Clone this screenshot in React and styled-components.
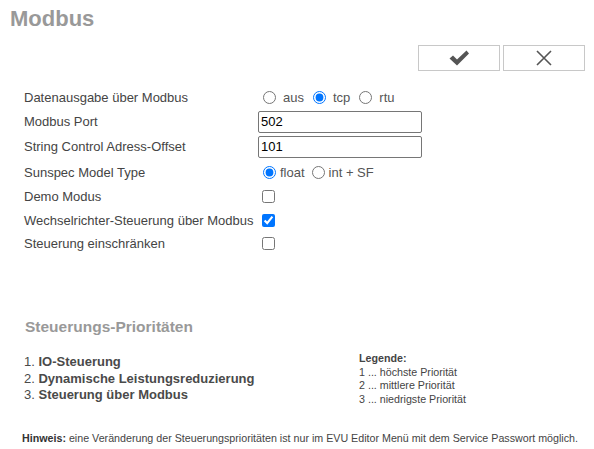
import React from "react";
import styled, { createGlobalStyle } from "styled-components";

const GlobalStyle = createGlobalStyle`
  body {
    margin: 0;
    background: #fff;
    font-family: "Liberation Sans", Arial, sans-serif;
    color: #444;
  }
`;

const settings = [
  { label: "Datenausgabe über Modbus", kind: "radio", name: "out", options: ["aus", "tcp", "rtu"], value: "tcp", h: 24 },
  { label: "Modbus Port", kind: "text", value: "502", h: 25 },
  { label: "String Control Adress-Offset", kind: "text", value: "101", h: 25 },
  { label: "Sunspec Model Type", kind: "radio", name: "sunspec", options: ["float", "int + SF"], value: "float", h: 26, tight: true },
  { label: "Demo Modus", kind: "check", value: false, h: 23 },
  { label: "Wechselrichter-Steuerung über Modbus", kind: "check", value: true, h: 24 },
  { label: "Steuerung einschränken", kind: "check", value: false, h: 23 },
];

const priorities = [
  ["1.", "IO-Steuerung"],
  ["2.", "Dynamische Leistungsreduzierung"],
  ["3.", "Steuerung über Modbus"],
];

const legend = ["1 ... höchste Priorität", "2 ... mittlere Priorität", "3 ... niedrigste Priorität"];

const Page = styled.div`
  padding: 8px 9px 0 10px;
`;

const Title = styled.h1`
  margin: 0;
  font-size: 22px;
  line-height: 22px;
  font-weight: bold;
  color: #999;
`;

const Toolbar = styled.div`
  display: flex;
  justify-content: flex-end;
  gap: 3px;
  margin-top: 15px;
`;

const ToolButton = styled.button`
  width: 82px;
  height: 26px;
  padding: 0;
  display: flex;
  align-items: center;
  justify-content: center;
  background: #fff;
  border: 1px solid #c8c8c8;
  border-radius: 0;
`;

const Form = styled.div`
  display: grid;
  grid-template-columns: 234px 1fr;
  margin: 14px 0 0 14px;
`;

const Label = styled.div`
  height: ${(p) => p.$h}px;
  display: flex;
  align-items: center;
  font-size: 13px;
  color: #444;
`;

const Control = styled.div`
  height: ${(p) => p.$h}px;
  display: flex;
  align-items: center;
`;

const Option = styled.label`
  display: flex;
  align-items: center;
  font-size: 13px;
  color: #555;
  margin-right: ${(p) => (p.$tight ? 2 : 4)}px;

  input {
    margin: 0 ${(p) => (p.$tight ? 4 : 7)}px 0 5px;
    width: 13px;
    height: 13px;
  }
`;

const TextInput = styled.input`
  width: 164px;
  height: 22px;
  box-sizing: border-box;
  padding: 1px 2px;
  font-family: "Liberation Sans", Arial, sans-serif;
  font-size: 13px;
  color: #000;
  border: 1px solid #767676;
  border-radius: 2px;
`;

const Check = styled.input`
  margin: 0 0 0 4px;
  width: 13px;
  height: 13px;
`;

const Section = styled.h2`
  margin: 63px 0 0 15px;
  font-size: 15.5px;
  line-height: 18px;
  font-weight: bold;
  color: #999;
`;

const PriorityRow = styled.div`
  display: flex;
  margin: 18px 0 0 14px;
`;

const PriorityList = styled.ol`
  list-style: none;
  margin: 0;
  padding: 0;
  width: 335px;
  font-size: 13px;
  line-height: 16.5px;
  color: #4a4a4a;
`;

const Legend = styled.div`
  margin-top: -2px;
  font-size: 10.7px;
  line-height: 13.5px;
  color: #444;
`;

const Note = styled.p`
  margin: 26px 0 0 12px;
  font-size: 10.7px;
  color: #444;

  b {
    color: #333;
  }
`;

const CheckIcon = () => (
  <svg width="22" height="18" viewBox="0 0 22 18">
    <path d="M1.5 9.5 L5 6.5 L9 10.5 L18.5 1.5 L21 4.5 L9 16.5 Z" fill="#555" />
  </svg>
);

const CloseIcon = () => (
  <svg width="18" height="18" viewBox="0 0 18 18">
    <path d="M2 2 L16 16 M16 2 L2 16" stroke="#555" strokeWidth="1.6" fill="none" />
  </svg>
);

const SettingControl = ({ item }) => {
  if (item.kind === "text") {
    return <TextInput type="text" defaultValue={item.value} />;
  }
  if (item.kind === "check") {
    return <Check type="checkbox" defaultChecked={item.value} />;
  }
  return item.options.map((opt) => (
    <Option key={opt} $tight={item.tight}>
      <input type="radio" name={item.name} defaultChecked={opt === item.value} />
      {opt}
    </Option>
  ));
};

const App = () => {
  return (
    <Page>
      <GlobalStyle />
      <Title>Modbus</Title>
      <Toolbar>
        <ToolButton>
          <CheckIcon />
        </ToolButton>
        <ToolButton>
          <CloseIcon />
        </ToolButton>
      </Toolbar>

      <Form>
        {settings.map((item) => (
          <React.Fragment key={item.label}>
            <Label $h={item.h}>{item.label}</Label>
            <Control $h={item.h}>
              <SettingControl item={item} />
            </Control>
          </React.Fragment>
        ))}
      </Form>

      <Section>Steuerungs-Prioritäten</Section>

      <PriorityRow>
        <PriorityList>
          {priorities.map(([n, text]) => (
            <li key={n}>
              {n} <b>{text}</b>
            </li>
          ))}
        </PriorityList>
        <Legend>
          <b>Legende:</b>
          {legend.map((l) => (
            <div key={l}>{l}</div>
          ))}
        </Legend>
      </PriorityRow>

      <Note>
        <b>Hinweis:</b> eine Veränderung der Steuerungsprioritäten ist nur im EVU Editor Menü mit dem Service Passwort möglich.
      </Note>
    </Page>
  );
};

export default App;
